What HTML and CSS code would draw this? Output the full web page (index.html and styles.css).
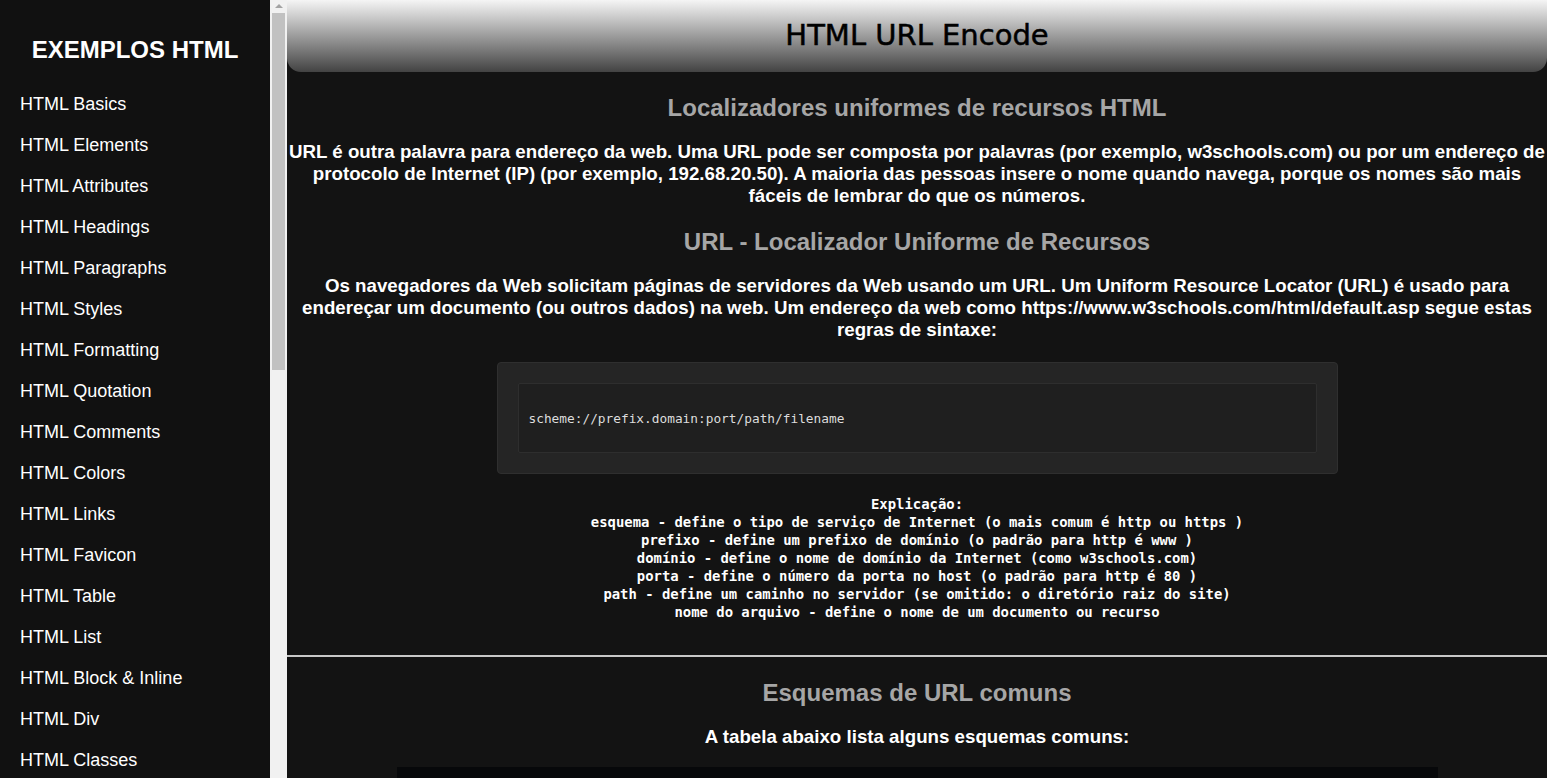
FILE: index.html
```html
<!DOCTYPE html>
<html lang="pt">
<head>
<meta charset="utf-8">
<title>HTML URL Encode</title>
<link rel="stylesheet" href="styles.css">
</head>
<body>
<div class="layout">
  <nav class="sidebar">
    <h2 class="side-title">EXEMPLOS HTML</h2>
    <ul class="side-list">
      <li><a href="#">HTML Basics</a></li>
      <li><a href="#">HTML Elements</a></li>
      <li><a href="#">HTML Attributes</a></li>
      <li><a href="#">HTML Headings</a></li>
      <li><a href="#">HTML Paragraphs</a></li>
      <li><a href="#">HTML Styles</a></li>
      <li><a href="#">HTML Formatting</a></li>
      <li><a href="#">HTML Quotation</a></li>
      <li><a href="#">HTML Comments</a></li>
      <li><a href="#">HTML Colors</a></li>
      <li><a href="#">HTML Links</a></li>
      <li><a href="#">HTML Favicon</a></li>
      <li><a href="#">HTML Table</a></li>
      <li><a href="#">HTML List</a></li>
      <li><a href="#">HTML Block &amp; Inline</a></li>
      <li><a href="#">HTML Div</a></li>
      <li><a href="#">HTML Classes</a></li>
    </ul>
  </nav>
  <div class="scrollbar">
    <div class="sb-arrow"></div>
    <div class="sb-thumb"></div>
  </div>
  <main class="content">
    <header class="page-header">
      <h1 class="page-title">HTML URL Encode</h1>
    </header>
    <h2 class="section-title">Localizadores uniformes de recursos HTML</h2>
    <h3 class="lead">URL é outra palavra para endereço da web. Uma URL pode ser composta por palavras (por exemplo, w3schools.com) ou por um endereço de protocolo de Internet (IP) (por exemplo, 192.68.20.50). A maioria das pessoas insere o nome quando navega, porque os nomes são mais fáceis de lembrar do que os números.</h3>
    <h2 class="section-title">URL - Localizador Uniforme de Recursos</h2>
    <h3 class="lead">Os navegadores da Web solicitam páginas de servidores da Web usando um URL. Um Uniform Resource Locator (URL) é usado para endereçar um documento (ou outros dados) na web. Um endereço da web como https://www.w3schools.com/html/default.asp segue estas regras de sintaxe:</h3>
    <div class="code-box">
      <div class="code-inner">scheme://prefix.domain:port/path/filename</div>
    </div>
    <div class="explain">
      <div>Explicação:</div>
      <div>esquema - define o tipo de serviço de Internet (o mais comum é http ou https )</div>
      <div>prefixo - define um prefixo de domínio (o padrão para http é www )</div>
      <div>domínio - define o nome de domínio da Internet (como w3schools.com)</div>
      <div>porta - define o número da porta no host (o padrão para http é 80 )</div>
      <div>path - define um caminho no servidor (se omitido: o diretório raiz do site)</div>
      <div>nome do arquivo - define o nome de um documento ou recurso</div>
    </div>
    <hr class="divider">
    <h2 class="section-title">Esquemas de URL comuns</h2>
    <h3 class="lead">A tabela abaixo lista alguns esquemas comuns:</h3>
    <div class="schemes"></div>
  </main>
</div>
</body>
</html>
```

FILE: styles.css
```css
html, body {
  margin: 0;
  height: 100%;
  overflow: hidden;
  background: #131313;
}

.layout {
  display: flex;
  height: 100vh;
}

.sidebar {
  width: 270px;
  flex: none;
  background: #111111;
  overflow: hidden;
  font-family: "Liberation Sans", Arial, sans-serif;
  color: #ffffff;
}

.side-title {
  margin: 36px 0 20px;
  font-size: 24px;
  line-height: 28px;
  font-weight: bold;
  text-align: center;
}

.side-list {
  list-style: none;
  margin: 0;
  padding: 0;
}

.side-list a {
  display: block;
  padding: 10px 20px;
  font-size: 18px;
  line-height: 21px;
  color: #ffffff;
  text-decoration: none;
}

.scrollbar {
  width: 17px;
  flex: none;
  background: #f1f1f1;
  display: flex;
  flex-direction: column;
  align-items: center;
}

.sb-arrow {
  width: 0;
  height: 0;
  margin-top: 4px;
  border-left: 4px solid transparent;
  border-right: 4px solid transparent;
  border-bottom: 4px solid #a3a3a3;
}

.sb-thumb {
  width: 13px;
  height: 357px;
  margin-top: 5px;
  background: #c1c1c1;
}

.content {
  flex: 1;
  min-width: 0;
  overflow: hidden;
  font-family: "Liberation Sans", Arial, sans-serif;
  color: #ffffff;
}

.page-header {
  height: 72px;
  margin-bottom: 22px;
  background: linear-gradient(#f5f5f5, #434343);
  border-radius: 0 0 14px 14px;
}

.page-title {
  margin: 0;
  font-family: "DejaVu Sans", Verdana, sans-serif;
  font-weight: normal;
  font-size: 29px;
  line-height: 70px;
  text-align: center;
  color: #000000;
  -webkit-text-stroke: 0.5px #000000;
}

.section-title {
  margin: 21px 0 19px;
  font-size: 24px;
  line-height: 28px;
  font-weight: bold;
  text-align: center;
  color: #a6a6a6;
}

.lead {
  margin: 0;
  font-size: 18.72px;
  line-height: 22px;
  font-weight: bold;
  text-align: center;
}

.code-box {
  width: 841px;
  box-sizing: border-box;
  margin: 21px auto 21px;
  padding: 20px;
  background: #252525;
  border: 1px solid #2f2f2f;
  border-radius: 4px;
}

.code-inner {
  height: 70px;
  box-sizing: border-box;
  display: flex;
  align-items: center;
  padding: 0 10px;
  background: #1f1f1f;
  border: 1px solid #2e2e2e;
  border-radius: 2px;
  font-family: "DejaVu Sans Mono", "Liberation Mono", monospace;
  font-size: 12.8px;
  color: #dddddd;
}

.explain {
  font-family: "DejaVu Sans Mono", "Liberation Mono", monospace;
  font-weight: bold;
  font-size: 13.9px;
  line-height: 18px;
  text-align: center;
  color: #ffffff;
}

.divider {
  height: 2px;
  margin: 34px 0 22px;
  border: 0;
  background: #c8c8c8;
}

.schemes {
  width: 1041px;
  height: 200px;
  margin: 19px auto 0;
  background: #07080a;
}
```
